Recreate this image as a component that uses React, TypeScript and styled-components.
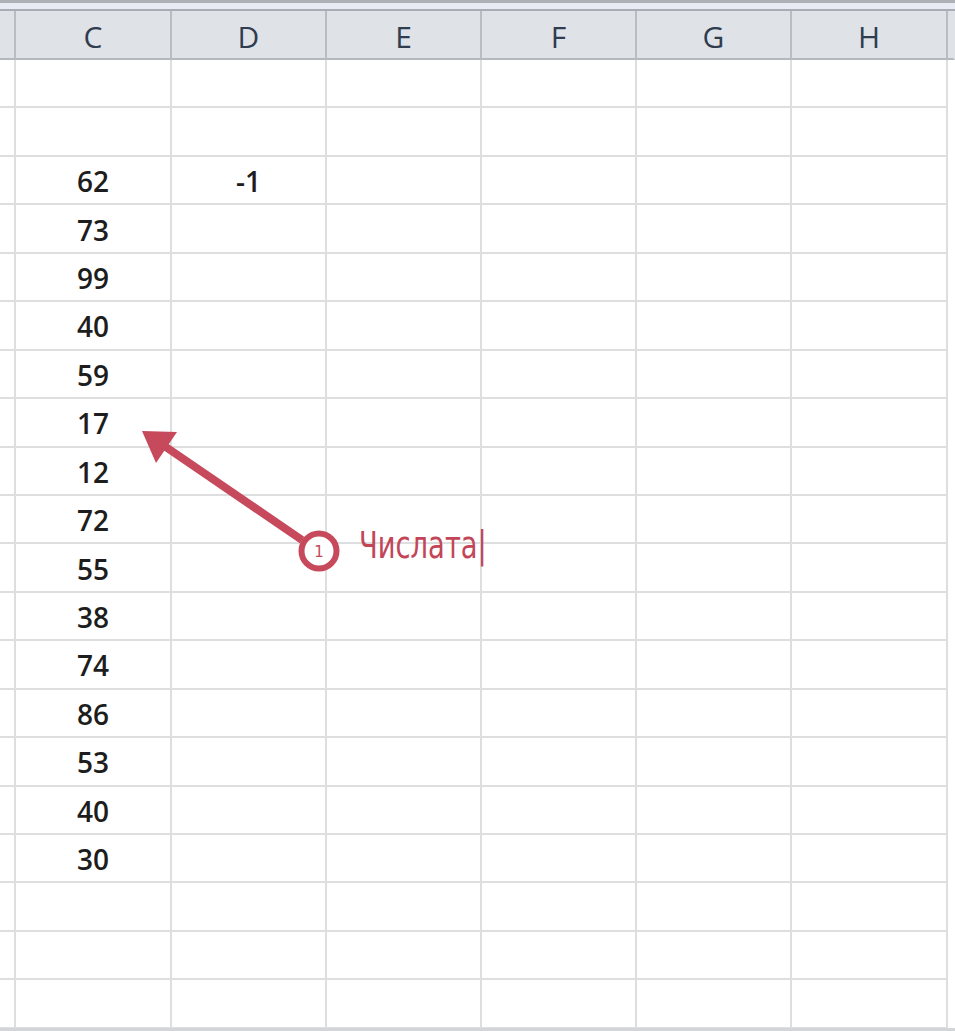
import React from 'react';
import styled, { createGlobalStyle } from 'styled-components';

const GlobalStyle = createGlobalStyle`
  html, body {
    margin: 0;
    padding: 0;
    background: #fff;
    overflow: hidden;
  }
  #root {
    width: 955px;
    height: 1031px;
  }
`;

const COLS = ['C', 'D', 'E', 'F', 'G', 'H'];
const COL_W = [156, 155, 155, 155, 155, 156];

// cell values by row index (0-based, first visible row)
const VALUES: Record<number, [string, string?]> = {
  2: ['62', '-1'],
  3: ['73'],
  4: ['99'],
  5: ['40'],
  6: ['59'],
  7: ['17'],
  8: ['12'],
  9: ['72'],
  10: ['55'],
  11: ['38'],
  12: ['74'],
  13: ['86'],
  14: ['53'],
  15: ['40'],
  16: ['30'],
};
const ROW_COUNT = 20;

const Sheet = styled.div`
  position: relative;
  width: 955px;
  height: 1031px;
  overflow: hidden;
  display: flex;
  flex-direction: column;
  font-family: 'Open Sans', 'Liberation Sans', sans-serif;
`;

const TopStrip = styled.div`
  height: 9px;
  flex: none;
  background: linear-gradient(#aeb1b6 0 3px, #e9ebf4 3px);
  border-bottom: 2px solid #a9adb3;
`;

const Grid = styled.div`
  flex: 1;
  display: grid;
  grid-template-columns: 16px ${COL_W.map((w) => `${w}px`).join(' ')} 1fr;
  grid-template-rows: 49px repeat(${ROW_COUNT}, 48.45px);
  align-content: start;
`;

const HeadCell = styled.div<{ $edge?: boolean }>`
  box-sizing: border-box;
  background: #dfe2e7;
  border-right: 2px solid ${({ $edge }) => ($edge ? 'transparent' : '#b8bdc4')};
  border-bottom: 2px solid #b3b8bf;
  display: flex;
  align-items: center;
  justify-content: center;
  padding-top: 4px;
  font-size: 30px;
  font-weight: 500;
  color: #2f3d4f;
`;

const Cell = styled.div<{ $edge?: boolean }>`
  box-sizing: border-box;
  background: #fff;
  border-right: 2px solid ${({ $edge }) => ($edge ? 'transparent' : '#dcdedf')};
  border-bottom: 2px solid ${({ $edge }) => ($edge ? 'transparent' : '#dcdedf')};
  display: flex;
  align-items: center;
  justify-content: center;
  font-size: 28px;
  font-weight: 600;
  color: #1d1d1d;
  padding-top: 2px;
`;

const BottomStrip = styled.div`
  position: absolute;
  left: 0;
  right: 0;
  bottom: 0;
  height: 3px;
  background: #d3d5d9;
`;

const Overlay = styled.svg`
  position: absolute;
  left: 0;
  top: 0;
  pointer-events: none;
`;

const Label = styled.span`
  position: absolute;
  left: 359px;
  top: 527px;
  font-family: 'DejaVu Sans', sans-serif;
  font-size: 37px;
  line-height: 1;
  color: #c24658;
  white-space: nowrap;
  transform: scaleX(0.74);
  transform-origin: left center;
`;

const RED = '#c64a5b';

export default function App() {
  const rows = Array.from({ length: ROW_COUNT }, (_, r) => r);
  return (
    <Sheet>
      <GlobalStyle />
      <TopStrip />
      <Grid>
        <HeadCell />
        {COLS.map((c) => (
          <HeadCell key={c}>{c}</HeadCell>
        ))}
        <HeadCell $edge />
        {rows.map((r) => {
          const v = VALUES[r];
          return (
            <React.Fragment key={r}>
              <Cell />
              {COLS.map((c, i) => (
                <Cell key={c}>{v && i < 2 ? v[i] : null}</Cell>
              ))}
              <Cell $edge />
            </React.Fragment>
          );
        })}
      </Grid>
      <BottomStrip />

      <Overlay width="955" height="1031" viewBox="0 0 955 1031">
        <line x1="302" y1="540" x2="160" y2="443" stroke={RED} strokeWidth="8" />
        <polygon points="142,431 177,432 156,463" fill={RED} />
        <circle cx="319" cy="551" r="17.5" fill="#fff" stroke={RED} strokeWidth="6" />
        <text
          x="319"
          y="557"
          textAnchor="middle"
          fontFamily="'DejaVu Sans', sans-serif"
          fontSize="15"
          fill={RED}
        >
          1
        </text>
      </Overlay>
      <Label>Числата|</Label>
    </Sheet>
  );
}
